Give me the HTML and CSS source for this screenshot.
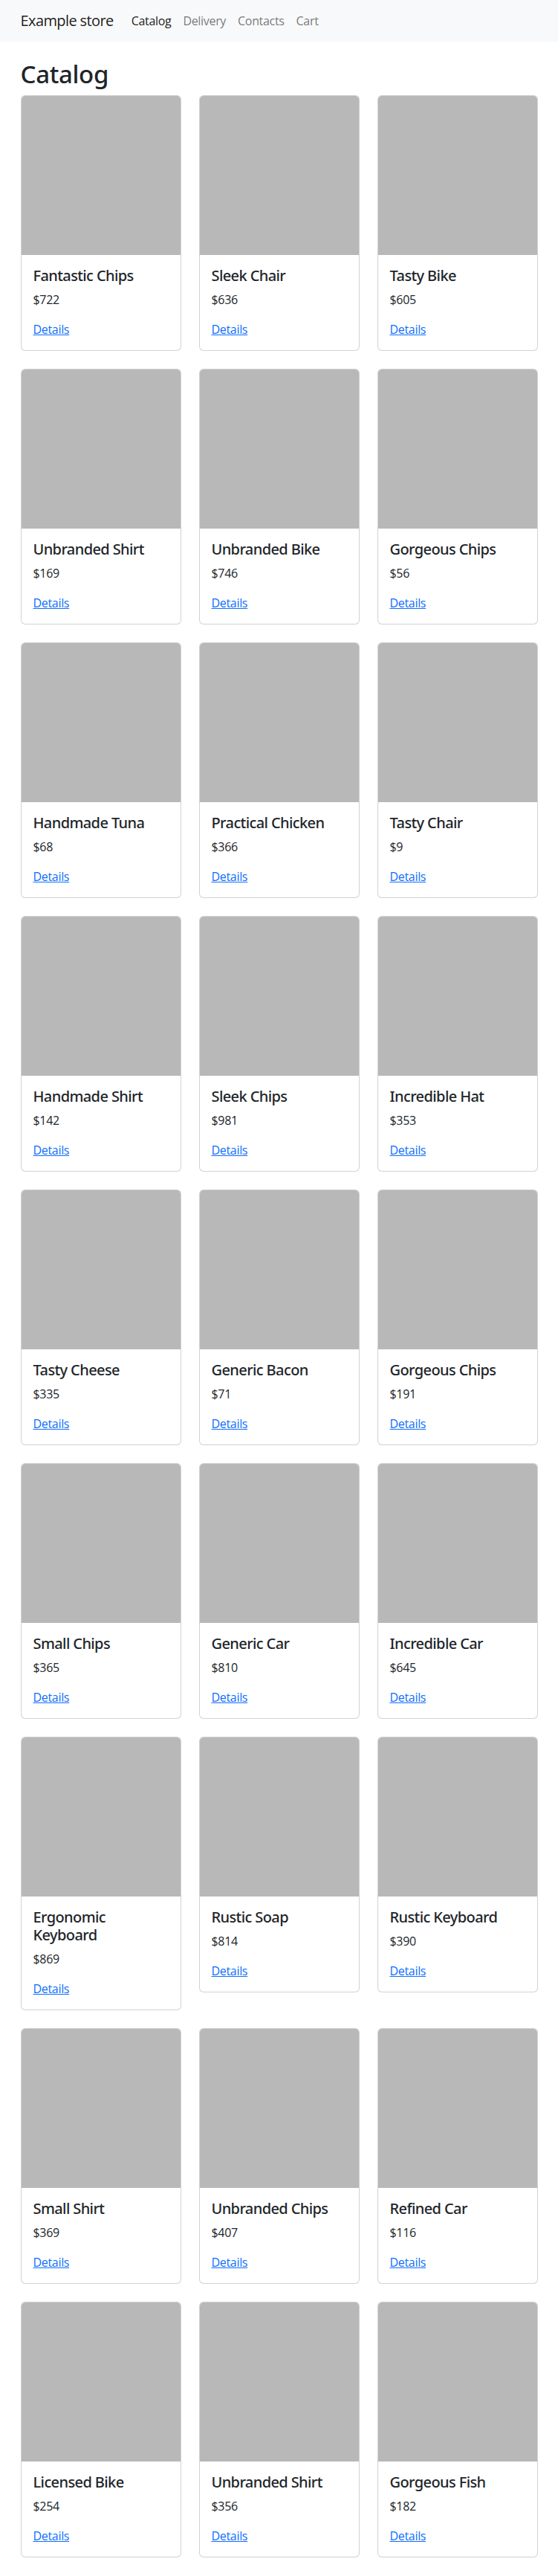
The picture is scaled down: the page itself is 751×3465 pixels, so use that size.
FILE: index.html
```html
<!DOCTYPE html>
<html lang="en">
<head>
<meta charset="utf-8">
<title>Example store</title>
<link rel="stylesheet" href="styles.css">
</head>
<body>
<nav class="navbar">
  <div class="container nav-inner">
    <a class="brand" href="#">Example store</a>
    <ul class="nav-links">
      <li><a class="nav-link active" href="#">Catalog</a></li>
      <li><a class="nav-link" href="#">Delivery</a></li>
      <li><a class="nav-link" href="#">Contacts</a></li>
      <li><a class="nav-link" href="#">Cart</a></li>
    </ul>
  </div>
</nav>
<main class="container">
  <h1 class="page-title">Catalog</h1>
  <div class="grid">
    <div class="card"><div class="card-img"></div><div class="card-body"><h5 class="card-title">Fantastic Chips</h5><p class="price">$722</p><a class="details" href="#">Details</a></div></div>
    <div class="card"><div class="card-img"></div><div class="card-body"><h5 class="card-title">Sleek Chair</h5><p class="price">$636</p><a class="details" href="#">Details</a></div></div>
    <div class="card"><div class="card-img"></div><div class="card-body"><h5 class="card-title">Tasty Bike</h5><p class="price">$605</p><a class="details" href="#">Details</a></div></div>
    <div class="card"><div class="card-img"></div><div class="card-body"><h5 class="card-title">Unbranded Shirt</h5><p class="price">$169</p><a class="details" href="#">Details</a></div></div>
    <div class="card"><div class="card-img"></div><div class="card-body"><h5 class="card-title">Unbranded Bike</h5><p class="price">$746</p><a class="details" href="#">Details</a></div></div>
    <div class="card"><div class="card-img"></div><div class="card-body"><h5 class="card-title">Gorgeous Chips</h5><p class="price">$56</p><a class="details" href="#">Details</a></div></div>
    <div class="card"><div class="card-img"></div><div class="card-body"><h5 class="card-title">Handmade Tuna</h5><p class="price">$68</p><a class="details" href="#">Details</a></div></div>
    <div class="card"><div class="card-img"></div><div class="card-body"><h5 class="card-title">Practical Chicken</h5><p class="price">$366</p><a class="details" href="#">Details</a></div></div>
    <div class="card"><div class="card-img"></div><div class="card-body"><h5 class="card-title">Tasty Chair</h5><p class="price">$9</p><a class="details" href="#">Details</a></div></div>
    <div class="card"><div class="card-img"></div><div class="card-body"><h5 class="card-title">Handmade Shirt</h5><p class="price">$142</p><a class="details" href="#">Details</a></div></div>
    <div class="card"><div class="card-img"></div><div class="card-body"><h5 class="card-title">Sleek Chips</h5><p class="price">$981</p><a class="details" href="#">Details</a></div></div>
    <div class="card"><div class="card-img"></div><div class="card-body"><h5 class="card-title">Incredible Hat</h5><p class="price">$353</p><a class="details" href="#">Details</a></div></div>
    <div class="card"><div class="card-img"></div><div class="card-body"><h5 class="card-title">Tasty Cheese</h5><p class="price">$335</p><a class="details" href="#">Details</a></div></div>
    <div class="card"><div class="card-img"></div><div class="card-body"><h5 class="card-title">Generic Bacon</h5><p class="price">$71</p><a class="details" href="#">Details</a></div></div>
    <div class="card"><div class="card-img"></div><div class="card-body"><h5 class="card-title">Gorgeous Chips</h5><p class="price">$191</p><a class="details" href="#">Details</a></div></div>
    <div class="card"><div class="card-img"></div><div class="card-body"><h5 class="card-title">Small Chips</h5><p class="price">$365</p><a class="details" href="#">Details</a></div></div>
    <div class="card"><div class="card-img"></div><div class="card-body"><h5 class="card-title">Generic Car</h5><p class="price">$810</p><a class="details" href="#">Details</a></div></div>
    <div class="card"><div class="card-img"></div><div class="card-body"><h5 class="card-title">Incredible Car</h5><p class="price">$645</p><a class="details" href="#">Details</a></div></div>
    <div class="card"><div class="card-img"></div><div class="card-body"><h5 class="card-title">Ergonomic Keyboard</h5><p class="price">$869</p><a class="details" href="#">Details</a></div></div>
    <div class="card"><div class="card-img"></div><div class="card-body"><h5 class="card-title">Rustic Soap</h5><p class="price">$814</p><a class="details" href="#">Details</a></div></div>
    <div class="card"><div class="card-img"></div><div class="card-body"><h5 class="card-title">Rustic Keyboard</h5><p class="price">$390</p><a class="details" href="#">Details</a></div></div>
    <div class="card"><div class="card-img"></div><div class="card-body"><h5 class="card-title">Small Shirt</h5><p class="price">$369</p><a class="details" href="#">Details</a></div></div>
    <div class="card"><div class="card-img"></div><div class="card-body"><h5 class="card-title">Unbranded Chips</h5><p class="price">$407</p><a class="details" href="#">Details</a></div></div>
    <div class="card"><div class="card-img"></div><div class="card-body"><h5 class="card-title">Refined Car</h5><p class="price">$116</p><a class="details" href="#">Details</a></div></div>
    <div class="card"><div class="card-img"></div><div class="card-body"><h5 class="card-title">Licensed Bike</h5><p class="price">$254</p><a class="details" href="#">Details</a></div></div>
    <div class="card"><div class="card-img"></div><div class="card-body"><h5 class="card-title">Unbranded Shirt</h5><p class="price">$356</p><a class="details" href="#">Details</a></div></div>
    <div class="card"><div class="card-img"></div><div class="card-body"><h5 class="card-title">Gorgeous Fish</h5><p class="price">$182</p><a class="details" href="#">Details</a></div></div>
  </div>
</main>
</body>
</html>
```
FILE: styles.css
```css
* { box-sizing: border-box; }

html, body {
  margin: 0;
  padding: 0;
}

body {
  font-family: "Open Sans", "Noto Sans", "Liberation Sans", sans-serif;
  font-size: 16px;
  line-height: 1.5;
  letter-spacing: -0.02em;
  color: #212529;
  background: #fff;
}

.container {
  width: 100%;
  max-width: 720px;
  margin: 0 auto;
  padding: 0 12px;
}

.navbar {
  background: #f8f9fa;
  padding: 8px 0;
}

.nav-inner {
  display: flex;
  align-items: center;
}

.brand {
  font-size: 20px;
  line-height: 30px;
  padding: 5px 0;
  margin-right: 16px;
  letter-spacing: -0.03em;
  color: rgba(0, 0, 0, 0.9);
  text-decoration: none;
  white-space: nowrap;
}

.nav-links {
  display: flex;
  list-style: none;
  margin: 0;
  padding: 0;
}

.nav-link {
  display: block;
  padding: 8px;
  line-height: 24px;
  color: rgba(0, 0, 0, 0.55);
  text-decoration: none;
}

.nav-link.active {
  color: rgba(0, 0, 0, 0.9);
}

.page-title {
  margin: 24px 0 8px;
  font-family: "Noto Sans", "Open Sans", sans-serif;
  font-size: 33px;
  font-weight: 500;
  line-height: 40px;
  letter-spacing: -0.01em;
}

.grid {
  display: grid;
  grid-template-columns: repeat(3, 1fr);
  column-gap: 24px;
  row-gap: 24px;
  align-items: start;
  padding-bottom: 24px;
}

.card {
  border: 1px solid rgba(0, 0, 0, 0.175);
  border-radius: 6px;
  background: #fff;
  overflow: hidden;
}

.card-img {
  aspect-ratio: 1 / 1;
  background: #b8b8b8;
}

.card-body {
  padding: 16px;
}

.card-title {
  margin: 0 0 8px;
  font-family: "Noto Sans", "Open Sans", sans-serif;
  font-size: 20px;
  font-weight: 500;
  line-height: 24px;
  letter-spacing: -0.03em;
}

.price {
  margin: 0 0 16px;
}

.details {
  color: #0d6efd;
  text-decoration: underline;
}
```
